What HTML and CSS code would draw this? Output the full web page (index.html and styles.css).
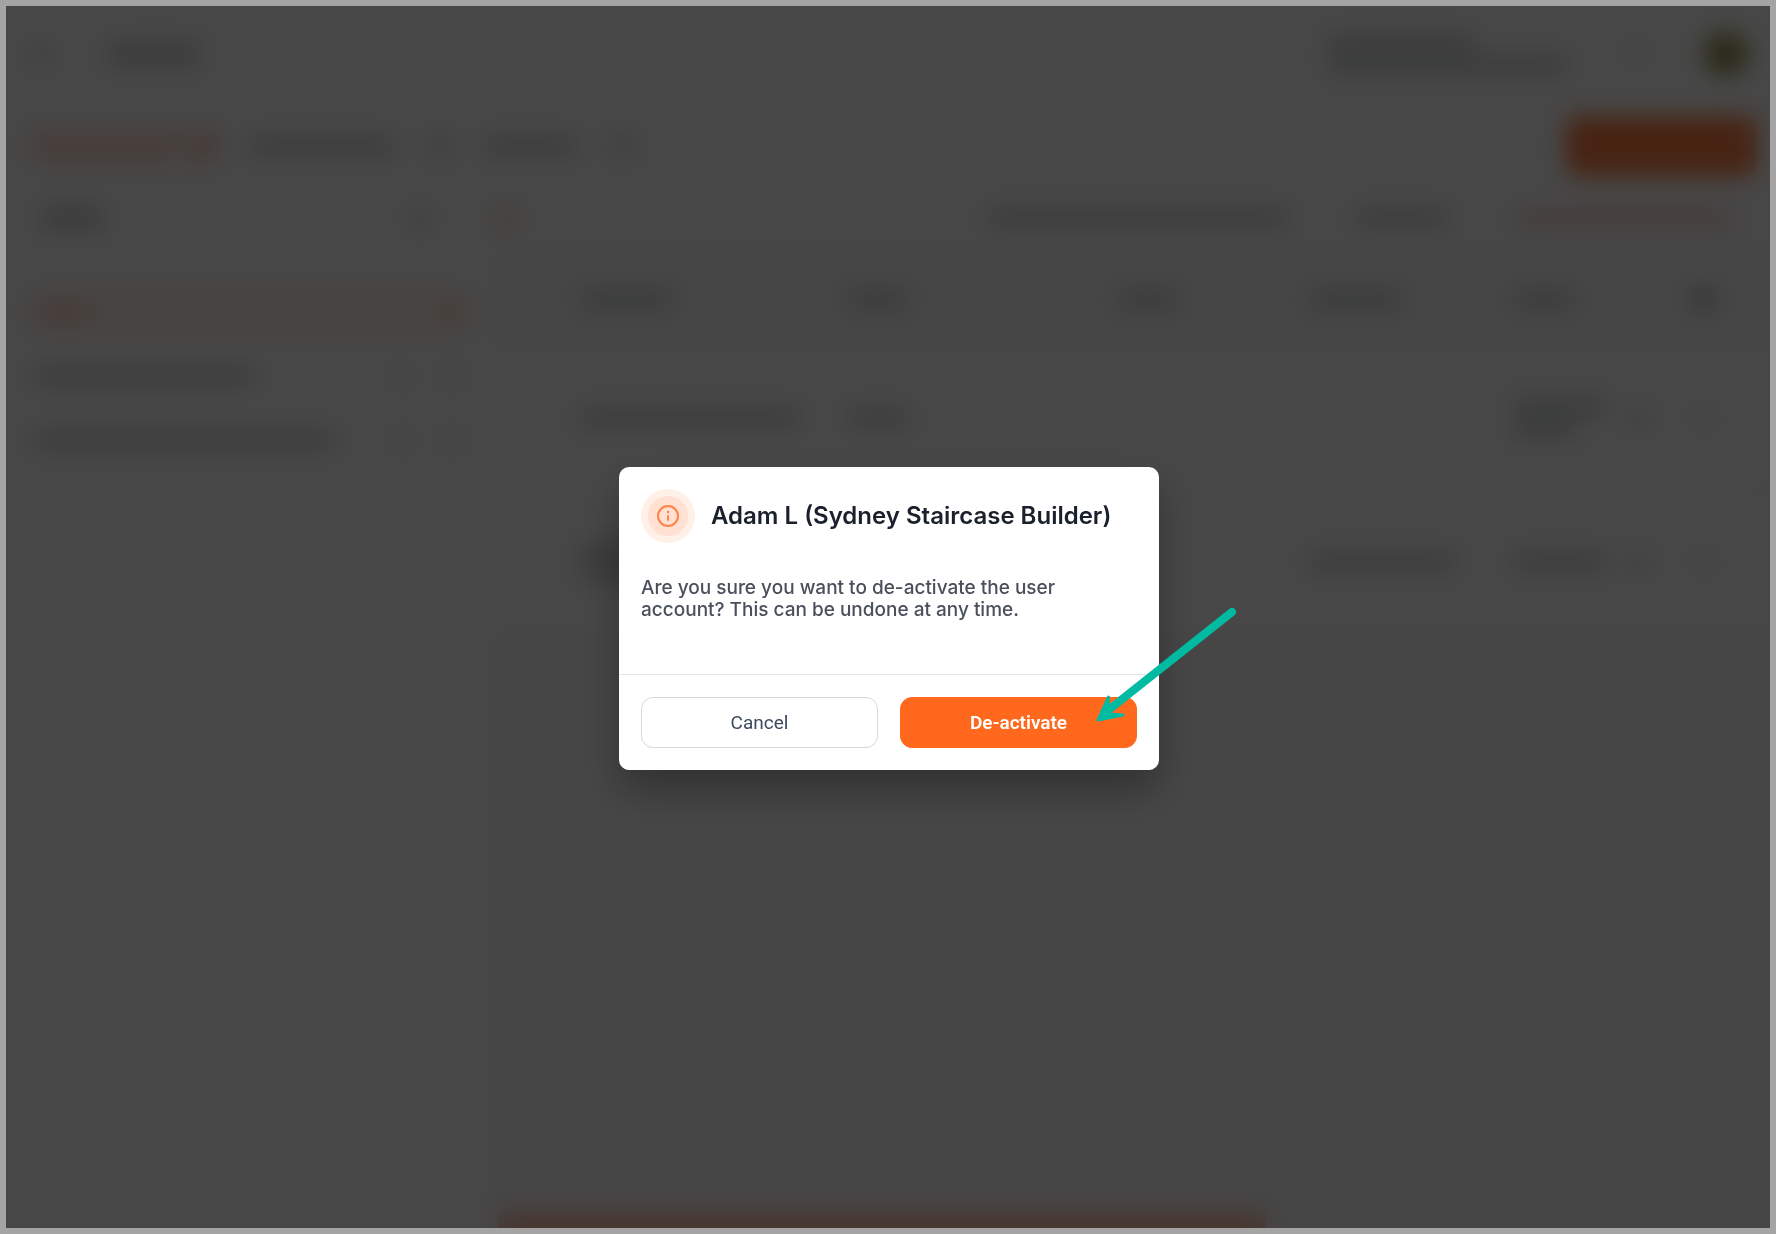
FILE: index.html
```
<!DOCTYPE html>
<html lang="en">
<head>
<meta charset="UTF-8">
<meta name="viewport" content="width=device-width, initial-scale=1">
<title>Adam L (Sydney Staircase Builder)</title>
<link rel="stylesheet" href="styles.css">
</head>
<body>

<div class="screen">

  <!-- page behind the dialog, blurred out by the overlay -->
  <div class="app" aria-hidden="true" inert>
    <div class="topbar">
      <span class="dot"></span>
      <span class="bar bar-sm tall"></span>
      <div class="account">
        <span class="bar bar-md"></span>
        <span class="bar bar-xl"></span>
      </div>
      <span class="dot faint"></span>
      <span class="avatar"></span>
    </div>

    <div class="tabs">
      <div class="tab active"><span class="bar bar-md orange"></span><span class="count orange"></span></div>
      <div class="tab"><span class="bar bar-md"></span><span class="count"></span></div>
      <div class="tab"><span class="bar bar-sm"></span><span class="count"></span></div>
      <div class="add"></div>
    </div>

    <div class="columns">
      <div class="side">
        <div class="search"><span class="bar bar-xs tall"></span><span class="dot"></span></div>
        <div class="group active"><span class="bar bar-xs orange"></span><span class="dot orange"></span></div>
        <div class="group"><span class="bar bar-lg"></span><span class="dot faint"></span><span class="dot faint"></span></div>
        <div class="group"><span class="bar bar-xxl"></span><span class="dot faint"></span><span class="dot faint"></span></div>
      </div>

      <div class="main">
        <div class="tools">
          <span class="dot orange"></span>
          <span class="bar bar-xxl push"></span>
          <span class="bar bar-sm"></span>
          <span class="bar bar-lg red"></span>
        </div>
        <table class="users">
          <colgroup>
            <col class="c-check"><col class="c-name"><col class="c-role"><col class="c-email"><col class="c-phone"><col class="c-last"><col class="c-state"><col class="c-menu">
          </colgroup>
          <thead>
            <tr>
              <th></th>
              <th><span class="bar bar-sm"></span></th>
              <th><span class="bar bar-xs"></span></th>
              <th><span class="bar bar-xs"></span></th>
              <th><span class="bar bar-sm"></span></th>
              <th><span class="bar bar-xs"></span></th>
              <th></th>
              <th><span class="dot dark"></span></th>
            </tr>
          </thead>
          <tbody>
            <tr>
              <td></td>
              <td><span class="bar bar-lg"></span></td>
              <td><span class="bar bar-xs"></span></td>
              <td></td>
              <td></td>
              <td><span class="bar bar-sm"></span><span class="bar bar-xs"></span></td>
              <td><span class="dot"></span></td>
              <td><span class="dot faint"></span></td>
            </tr>
            <tr>
              <td></td>
              <td><span class="bar bar-xs"></span><span class="bar bar-xs"></span></td>
              <td></td>
              <td></td>
              <td><span class="bar bar-md"></span></td>
              <td><span class="bar bar-sm"></span></td>
              <td><span class="dot"></span></td>
              <td><span class="dot faint"></span></td>
            </tr>
          </tbody>
        </table>
        <div class="notice"></div>
      </div>
    </div>
  </div>

  <div class="overlay">
    <div class="modal" role="dialog" aria-modal="true" aria-labelledby="modalTitle" aria-describedby="modalText">
      <div class="modal-head">
        <svg class="modal-icon" viewBox="0 0 54 54" aria-hidden="true">
          <circle cx="27" cy="27" r="27" fill="#fff0e8"/>
          <circle cx="27" cy="27" r="20" fill="#ffe0d1"/>
          <circle cx="27" cy="27" r="10" fill="none" stroke="#ff8348" stroke-width="2"/>
          <path d="M27 27v4" fill="none" stroke="#ff8348" stroke-width="2" stroke-linecap="round"/>
          <circle cx="27" cy="23" r="1.2" fill="#ff8348"/>
        </svg>
        <h1 id="modalTitle">Adam L (Sydney Staircase Builder)</h1>
      </div>
      <p id="modalText">Are you sure you want to de-activate the user account? This can be undone at any time.</p>
      <div class="modal-actions">
        <button type="button" class="btn">Cancel</button>
        <button type="button" class="btn btn-primary">De-activate</button>
      </div>
      <svg class="arrow" viewBox="0 0 150 124" aria-hidden="true">
        <path d="M143 7L22 103" fill="none" stroke="#00bba1" stroke-width="8" stroke-linecap="round"/>
        <path d="M9 115L19.5 92L19 105L22 109L34 110Z" fill="#00bba1" stroke="#00bba1" stroke-width="3" stroke-linejoin="round"/>
      </svg>
    </div>
  </div>

</div>

</body>
</html>
```
FILE: styles.css
```
* { box-sizing: border-box; }
body { margin: 0; font-family: Inter, 'Liberation Sans', sans-serif; background: #a4a4a4; }
.screen {
  position: relative;
  height: 100vh;
  border: 6px solid #a4a4a4;
  background: white;
  overflow: hidden;
}

/* page behind */
.app { height: 100%; display: flex; flex-direction: column; background: white; }
.bar {
  display: block;
  height: 18px;
  border-radius: 4px;
  background: #d0d3d3;
}
.account .bar + .bar, .users .bar + .bar { margin-top: 4px; }
.bar.tall { height: 24px; }
.bar-xs { width: 60px; }
.bar-sm { width: 92px; }
.bar-md { width: 146px; }
.bar-lg { width: 220px; }
.bar-xl { width: 240px; }
.bar-xxl { width: 300px; }
.dot {
  display: block;
  width: 20px;
  height: 20px;
  border-radius: 6px;
  background: #dcdede;
}
.faint { background: #ebeded; }
.dark { background: #a8acac; }
.bar.orange { background: #ffd2c4; }
.dot.orange { background: #ffd0b8; }
.bar.red { background: #f4d6d2; }

.topbar { display: flex; align-items: center; height: 96px; padding: 0 22px 0 24px; gap: 58px; }
.account { margin-left: auto; }
.avatar { width: 44px; height: 44px; border-radius: 50%; background: #948f50; }

.tabs { display: flex; align-items: center; height: 88px; padding: 0 14px 0 24px; gap: 30px; }
.tab { display: flex; align-items: center; gap: 32px; height: 42px; }
.tab.active { gap: 14px; background: #fff2ea; }
.count { width: 28px; height: 24px; border-radius: 6px; background: #e2e4e4; }
.count.orange { background: #ffcbbb; }
.add { width: 190px; height: 60px; margin-left: auto; border-radius: 10px; background: #ff7d42; }

.columns { flex: 1; display: flex; min-height: 0; }
.side { width: 484px; padding: 0 20px 0 24px; }
.search { display: flex; align-items: center; justify-content: space-between; height: 56px; padding: 0 40px 0 12px; }
.group { display: flex; align-items: center; height: 48px; margin-bottom: 16px; padding: 0 8px 0 4px; gap: 30px; }
.group .bar + .dot { margin-left: auto; }
.group.active { margin-top: 42px; background: #fff3eb; }
.main { flex: 1; display: flex; flex-direction: column; background: #fafafa; }
.tools { display: flex; align-items: center; height: 56px; padding: 0 34px 0 6px; gap: 68px; background: white; }
.push { margin-left: auto; }

.users { width: 100%; border-collapse: collapse; table-layout: fixed; }
.users th, .users td { padding: 0; }
.users th { height: 100px; padding-top: 12px; }
.users td { height: 144px; border-top: 12px solid #fafafa; border-bottom: 12px solid #fafafa; background: white; }
.c-check { width: 7%; }
.c-name { width: 21%; }
.c-role { width: 21%; }
.c-email { width: 15%; }
.c-phone { width: 16%; }
.c-last { width: 9%; }
.c-state { width: 5%; }
.c-menu { width: 6%; }
.notice { width: 60%; height: 16px; margin: auto 0 0 8px; background: #ffc0aa; }

/* dialog */
.overlay {
  position: absolute;
  inset: 0;
  display: flex;
  align-items: center;
  justify-content: center;
  padding: 2px 0 0 2px;
  background: rgba(0, 0, 0, 0.72);
  backdrop-filter: blur(12px);
}
.modal {
  position: relative;
  width: 540px;
  border-radius: 10px;
  background: white;
  box-shadow: 0 20px 40px rgba(0, 0, 0, 0.3);
}
.modal-head { display: flex; align-items: center; gap: 16px; padding: 22px 22px 0; }
.modal-icon { width: 54px; height: 54px; }
.modal h1 { margin: 0; font-size: 24px; line-height: 32px; font-weight: 600; color: #1a202c; }
.modal p {
  margin: 0;
  padding: 34px 80px 53px 22px;
  font-size: 19px;
  line-height: 22px;
  font-weight: 500;
  color: #4a4f5c;
}
.modal-actions { display: flex; gap: 22px; padding: 22px; border-top: 1px solid #e2e4e6; }
.btn {
  flex: 1;
  height: 51px;
  border: 1px solid #d3d7de;
  border-radius: 12px;
  background: white;
  color: #3f4a5e;
  font-family: Roboto, 'Liberation Sans', sans-serif;
  font-size: 19px;
  cursor: pointer;
}
.btn:hover { background: #f7f8fa; }
.btn-primary { border-color: #ff681d; background: #ff681d; color: white; font-weight: 600; }
.btn-primary:hover { background: #f05c12; }
.arrow {
  position: absolute;
  left: 470px;
  top: 138px;
  width: 150px;
  height: 124px;
  pointer-events: none;
}
```
